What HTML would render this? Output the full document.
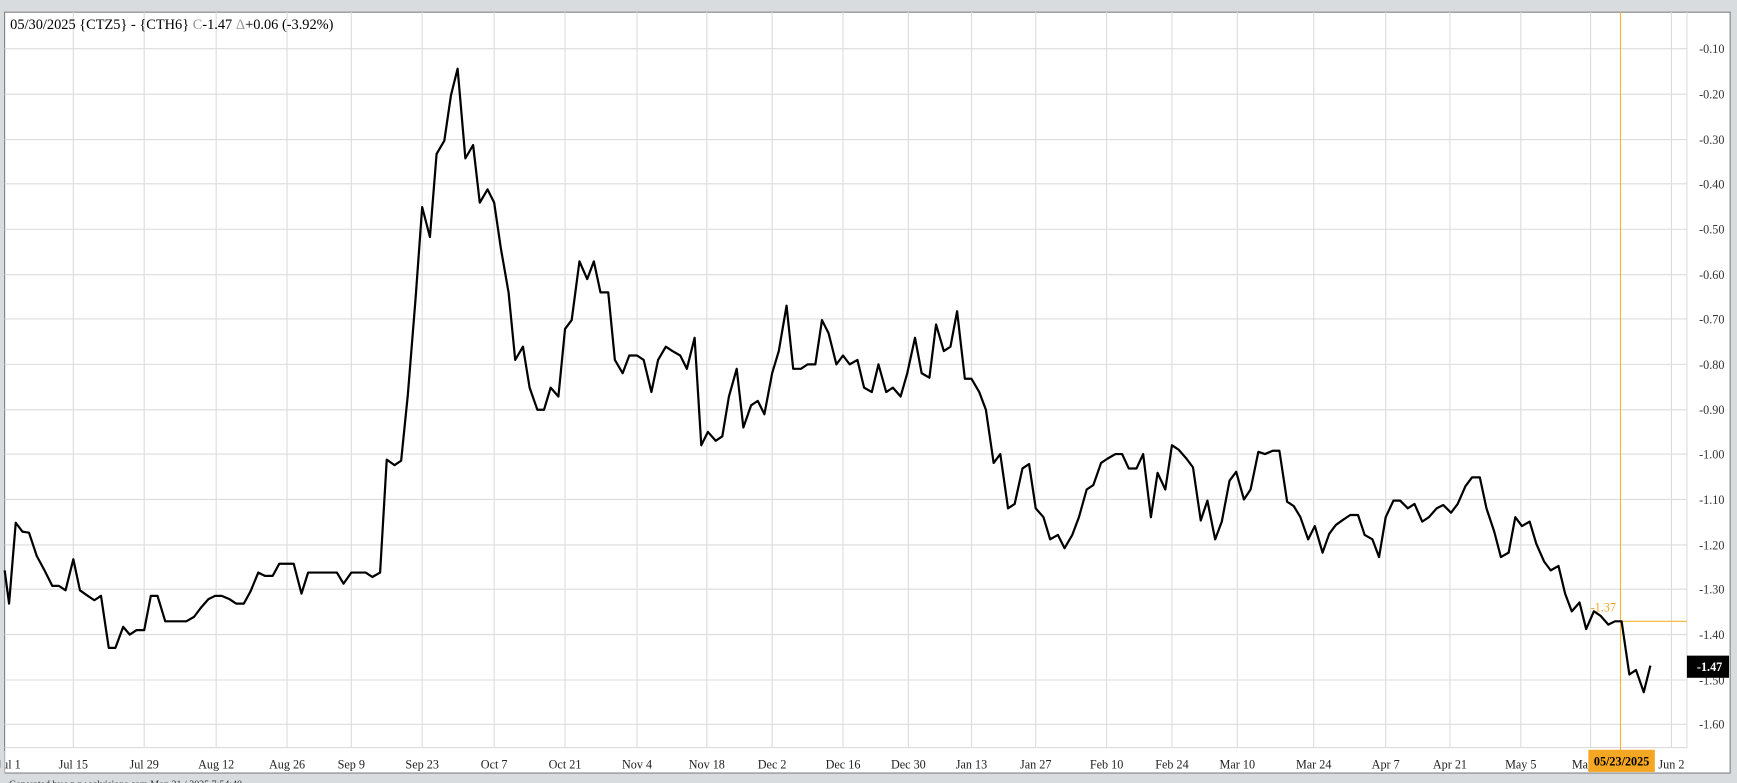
<!DOCTYPE html>
<html><head><meta charset="utf-8"><style>
html,body{margin:0;padding:0;background:#d9dcdf;overflow:hidden}
svg{display:block}
text{font-family:"Liberation Serif",serif}
</style></head><body>
<svg width="1737" height="783" viewBox="0 0 1568 707" xmlns="http://www.w3.org/2000/svg">
<rect x="0" y="0" width="1568" height="707" fill="#d9dcdf"/>
<rect x="4" y="11" width="1558" height="687" fill="#fff" stroke="#777" stroke-width="0.9"/>
<g stroke="#dcdcdc" stroke-width="1">
<line x1="4" y1="44" x2="1523" y2="44"/><line x1="4" y1="85" x2="1523" y2="85"/><line x1="4" y1="126" x2="1523" y2="126"/><line x1="4" y1="166" x2="1523" y2="166"/><line x1="4" y1="207" x2="1523" y2="207"/><line x1="4" y1="248" x2="1523" y2="248"/><line x1="4" y1="288" x2="1523" y2="288"/><line x1="4" y1="329" x2="1523" y2="329"/><line x1="4" y1="370" x2="1523" y2="370"/><line x1="4" y1="410" x2="1523" y2="410"/><line x1="4" y1="451" x2="1523" y2="451"/><line x1="4" y1="492" x2="1523" y2="492"/><line x1="4" y1="532" x2="1523" y2="532"/><line x1="4" y1="573" x2="1523" y2="573"/><line x1="4" y1="614" x2="1523" y2="614"/><line x1="4" y1="654" x2="1523" y2="654"/>
<line x1="66" y1="11" x2="66" y2="675"/><line x1="130" y1="11" x2="130" y2="675"/><line x1="195" y1="11" x2="195" y2="675"/><line x1="259" y1="11" x2="259" y2="675"/><line x1="317" y1="11" x2="317" y2="675"/><line x1="381" y1="11" x2="381" y2="675"/><line x1="446" y1="11" x2="446" y2="675"/><line x1="510" y1="11" x2="510" y2="675"/><line x1="575" y1="11" x2="575" y2="675"/><line x1="638" y1="11" x2="638" y2="675"/><line x1="697" y1="11" x2="697" y2="675"/><line x1="761" y1="11" x2="761" y2="675"/><line x1="820" y1="11" x2="820" y2="675"/><line x1="877" y1="11" x2="877" y2="675"/><line x1="935" y1="11" x2="935" y2="675"/><line x1="999" y1="11" x2="999" y2="675"/><line x1="1058" y1="11" x2="1058" y2="675"/><line x1="1117" y1="11" x2="1117" y2="675"/><line x1="1186" y1="11" x2="1186" y2="675"/><line x1="1251" y1="11" x2="1251" y2="675"/><line x1="1309" y1="11" x2="1309" y2="675"/><line x1="1373" y1="11" x2="1373" y2="675"/><line x1="1436" y1="11" x2="1436" y2="675"/><line x1="1509" y1="11" x2="1509" y2="675"/>
<line x1="4" y1="675" x2="1523" y2="675"/><line x1="1523" y1="11" x2="1523" y2="675"/>
</g>
<line x1="1463" y1="11" x2="1463" y2="678" stroke="#f5b335" stroke-width="1"/>
<line x1="1463" y1="561" x2="1523" y2="561" stroke="#f5b335" stroke-width="1"/>
<polyline fill="none" stroke="#000" stroke-width="2" stroke-linejoin="round" points="4,515 8,545 14,472 20,480 26,481 33,502 40,515 47,529 53,529 59,533 66,505 72,533 79,538 85,542 91,538 98,585 104,585 111,566 117,573 123,569 130,569 136,538 142,538 149,561 155,561 162,561 168,561 175,557 181,549 188,541 194,538 200,538 207,541 213,545 220,545 226,534 233,517 239,520 246,520 252,509 259,509 265,509 272,536 278,517 285,517 291,517 297,517 304,517 310,527 317,517 323,517 330,517 336,521 343,517 349,415 356,420 362,416 368,357 375,270 381,187 388,214 394,139 401,127 407,86 413,62 420,143 427,131 433,183 440,171 446,183 452,224 459,264 465,325 472,313 478,350 485,370 491,370 497,350 504,358 510,297 516,289 523,236 530,252 536,236 542,264 549,264 555,325 562,337 568,321 575,321 581,325 588,354 594,325 601,313 607,317 614,321 620,333 627,305 633,402 639,390 646,398 652,394 658,358 665,333 671,386 678,366 684,362 690,374 697,337 703,317 710,276 716,333 723,333 729,329 736,329 742,289 748,301 755,329 761,321 767,329 774,325 780,350 787,354 793,329 800,354 806,350 813,358 819,337 826,305 832,337 839,341 845,293 852,317 858,313 864,281 871,342 877,342 884,354 890,370 897,418 903,410 910,459 916,455 923,423 929,419 935,459 942,467 948,487 955,483 961,495 968,483 974,467 981,442 987,438 994,418 1000,414 1007,410 1013,410 1019,423 1026,423 1032,410 1039,467 1045,427 1052,442 1058,402 1064,406 1071,414 1077,422 1084,470 1090,452 1097,487 1103,471 1110,434 1116,426 1123,451 1129,442 1136,408 1142,410 1149,407 1155,407 1162,453 1168,457 1174,467 1181,487 1187,475 1194,499 1200,482 1206,474 1213,469 1219,465 1226,465 1232,483 1239,487 1245,503 1251,467 1258,452 1264,452 1271,459 1277,455 1284,471 1290,467 1297,459 1303,456 1310,463 1316,455 1323,439 1329,431 1336,431 1342,459 1349,480 1355,503 1362,499 1368,467 1374,475 1381,471 1387,491 1394,507 1400,515 1407,511 1413,536 1419,552 1426,544 1432,568 1439,552 1445,556 1452,564 1458,561 1464,561 1471,609 1477,605 1484,625 1490,601"/>
<text x="9" y="26" font-size="13" fill="#000">05/30/2025 {CTZ5} - {CTH6} <tspan fill="#999">C</tspan>-1.47 <tspan fill="#999">Δ</tspan>+0.06 (-3.92%)</text>
<g font-size="11" fill="#333">
<text x="1534" y="48">-0.10</text><text x="1534" y="89">-0.20</text><text x="1534" y="130">-0.30</text><text x="1534" y="170">-0.40</text><text x="1534" y="211">-0.50</text><text x="1534" y="252">-0.60</text><text x="1534" y="292">-0.70</text><text x="1534" y="333">-0.80</text><text x="1534" y="374">-0.90</text><text x="1534" y="414">-1.00</text><text x="1534" y="455">-1.10</text><text x="1534" y="496">-1.20</text><text x="1534" y="536">-1.30</text><text x="1534" y="577">-1.40</text><text x="1534" y="618">-1.50</text><text x="1534" y="658">-1.60</text>
</g>
<rect x="1523" y="592" width="38" height="20" fill="#000"/>
<text x="1532" y="606" font-size="11" font-weight="bold" fill="#fff">-1.47</text>
<text x="1436" y="552" font-size="11" fill="#f5a623">-1.37</text>
<g font-size="11" fill="#222" text-anchor="middle">
<text x="8" y="694">Jul 1</text><text x="66" y="694">Jul 15</text><text x="130" y="694">Jul 29</text><text x="195" y="694">Aug 12</text><text x="259" y="694">Aug 26</text><text x="317" y="694">Sep 9</text><text x="381" y="694">Sep 23</text><text x="446" y="694">Oct 7</text><text x="510" y="694">Oct 21</text><text x="575" y="694">Nov 4</text><text x="638" y="694">Nov 18</text><text x="697" y="694">Dec 2</text><text x="761" y="694">Dec 16</text><text x="820" y="694">Dec 30</text><text x="877" y="694">Jan 13</text><text x="935" y="694">Jan 27</text><text x="999" y="694">Feb 10</text><text x="1058" y="694">Feb 24</text><text x="1117" y="694">Mar 10</text><text x="1186" y="694">Mar 24</text><text x="1251" y="694">Apr 7</text><text x="1309" y="694">Apr 21</text><text x="1373" y="694">May 5</text><text x="1436" y="694">May 19</text><text x="1509" y="694">Jun 2</text>
</g>
<rect x="0" y="678" width="4" height="29" fill="#d9dcdf"/>
<rect x="1434" y="677" width="60" height="20" fill="#f5a623"/>
<text x="1464" y="691" font-size="11" font-weight="bold" fill="#000" text-anchor="middle">05/23/2025</text>
<text x="8" y="711" font-size="9" fill="#333">Generated by www.sqlvisions.com Mon 21 / 2025 7:54:40</text>
</svg>
</body></html>
